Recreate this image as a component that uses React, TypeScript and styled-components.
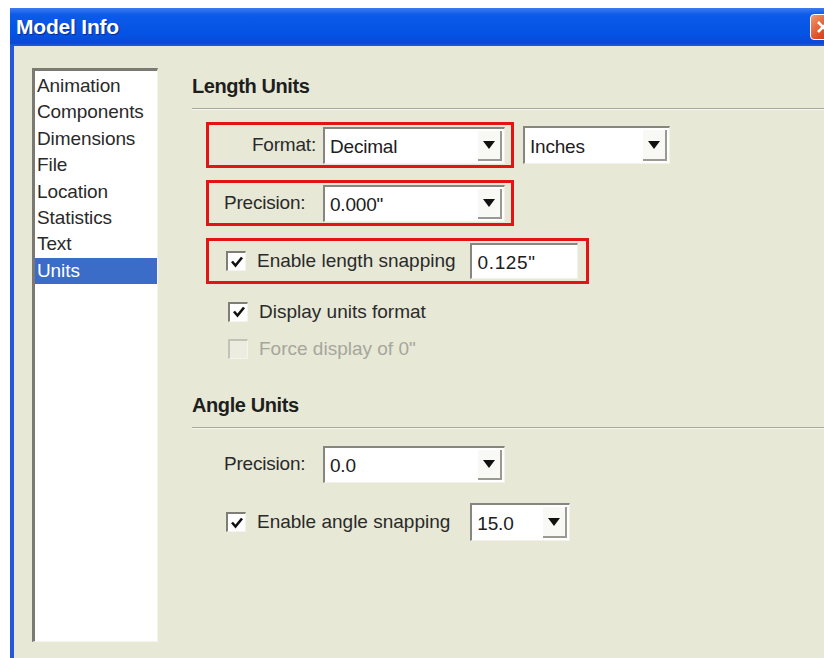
import React from 'react';
import styled, { createGlobalStyle } from 'styled-components';

const GlobalStyle = createGlobalStyle`
  html, body {
    margin: 0;
    padding: 0;
    background: #ffffff;
    overflow: hidden;
  }
  body {
    font-family: 'Liberation Sans', Arial, sans-serif;
  }
`;

const Screen = styled.div`
  width: 824px;
  height: 658px;
  overflow: hidden;
  padding: 8px 0 0 10px;
  box-sizing: border-box;
`;

const Window = styled.div`
  width: 830px;
  height: 660px;
  display: flex;
  flex-direction: column;
`;

const TitleBar = styled.div`
  height: 38px;
  flex: 0 0 38px;
  display: flex;
  align-items: center;
  justify-content: space-between;
  padding: 0 4px 0 6px;
  background: linear-gradient(
    #3d7bf2 0%,
    #0b5ae8 18%,
    #0553e4 70%,
    #0a48d4 92%,
    #1d5fd8 100%
  );
`;

const Title = styled.span`
  color: #ffffff;
  font-weight: bold;
  font-size: 21px;
  letter-spacing: -0.2px;
  text-shadow: 1px 1px 1px #0a2a90;
`;

const CloseButton = styled.div`
  width: 26px;
  height: 26px;
  box-sizing: border-box;
  border-radius: 4px;
  border: 1px solid #ffffff;
  background: linear-gradient(135deg, #f09a70, #dc4e22 60%, #c23a14);
  display: flex;
  align-items: center;
  justify-content: center;
`;

const Body = styled.div`
  flex: 1;
  display: flex;
  align-items: flex-start;
  gap: 34px;
  background: #e7e8d6;
  border-left: 4px solid #2458d8;
  padding: 22px 0 0 18px;
`;

const ListBox = styled.div`
  width: 126px;
  height: 574px;
  box-sizing: border-box;
  background: #ffffff;
  border-top: 3px solid #7a7a72;
  border-left: 3px solid #7a7a72;
  border-right: 1px solid #f4f4ec;
  border-bottom: 1px solid #f4f4ec;
  padding-top: 2px;
`;

const ListItem = styled.div<{ $selected?: boolean }>`
  height: 26.4px;
  line-height: 26.4px;
  font-size: 19px;
  letter-spacing: -0.1px;
  padding-left: 2px;
  color: ${(p) => (p.$selected ? '#ffffff' : '#2a2a2a')};
  background: ${(p) => (p.$selected ? '#3a6cc8' : 'transparent')};
`;

const Panel = styled.div`
  flex: 1;
  display: flex;
  flex-direction: column;
  padding-top: 6px;
`;

const Heading = styled.div<{ $gap?: number }>`
  font-weight: bold;
  font-size: 20px;
  line-height: 24px;
  letter-spacing: -0.4px;
  color: #1e1e1e;
  margin-top: ${(p) => p.$gap ?? 0}px;
`;

const Rule = styled.div`
  height: 0;
  border-top: 1px solid #a9a99a;
  border-bottom: 1px solid #f6f6ee;
  margin-top: 10px;
`;

const Fields = styled.div`
  display: flex;
  flex-direction: column;
  gap: 12px;
  margin-top: 12px;
  padding-left: 14px;
`;

const Line = styled.div`
  display: flex;
  align-items: center;
  gap: 9px;
`;

const Highlight = styled.div<{ $marked?: boolean; $right?: number }>`
  display: inline-flex;
  align-items: center;
  align-self: flex-start;
  height: 46px;
  box-sizing: border-box;
  border: 3px solid ${(p) => (p.$marked ? '#e31414' : 'transparent')};
  padding: 0 ${(p) => p.$right ?? 6}px 0 15px;
`;

const Label = styled.span<{ $width: number; $align?: string }>`
  width: ${(p) => p.$width}px;
  margin-right: 7px;
  text-align: ${(p) => p.$align ?? 'left'};
  font-size: 19px;
  letter-spacing: -0.2px;
  color: #2a2a2a;
`;

const Caption = styled.span<{ $gap?: number }>`
  margin-right: ${(p) => p.$gap ?? 0}px;
  font-size: 19px;
  letter-spacing: 0px;
  color: #2a2a2a;
`;

const ComboBox = styled.div<{ $width: number; $height?: number }>`
  width: ${(p) => p.$width}px;
  height: ${(p) => p.$height ?? 37}px;
  box-sizing: border-box;
  display: flex;
  align-items: stretch;
  background: #ffffff;
  border-top: 2px solid #86867e;
  border-left: 2px solid #86867e;
  border-right: 1px solid #f2f2ea;
  border-bottom: 1px solid #f2f2ea;
`;

const ComboText = styled.span`
  flex: 1;
  display: flex;
  align-items: center;
  padding: 3px 0 0 5px;
  font-size: 19px;
  letter-spacing: -0.2px;
  color: #202020;
`;

const ArrowButton = styled.span`
  width: 22px;
  margin: 2px 2px 2px 0;
  display: flex;
  align-items: center;
  justify-content: center;
  background: #f8f8f4;
  border-right: 2px solid #9a9a92;
  border-bottom: 2px solid #9a9a92;
`;

const Arrow = styled.span`
  width: 0;
  height: 0;
  border-left: 6px solid transparent;
  border-right: 6px solid transparent;
  border-top: 8px solid #111111;
`;

const TextBox = styled.div<{ $width: number }>`
  width: ${(p) => p.$width}px;
  height: 36px;
  box-sizing: border-box;
  display: flex;
  align-items: center;
  padding: 3px 0 0 6px;
  background: #ffffff;
  border-top: 2px solid #86867e;
  border-left: 2px solid #86867e;
  border-right: 1px solid #f2f2ea;
  border-bottom: 1px solid #f2f2ea;
  font-size: 19px;
  letter-spacing: 0.6px;
  color: #202020;
`;

const CheckGroup = styled.div`
  display: flex;
  flex-direction: column;
  margin-top: -3px;
`;

const CheckRow = styled.label<{ $disabled?: boolean }>`
  display: flex;
  align-items: center;
  height: 37px;
  padding-left: 20px;
  color: ${(p) => (p.$disabled ? '#a6a69c' : '#2a2a2a')};
  font-size: 19px;
  letter-spacing: 0px;
`;

const Box = styled.span<{ $disabled?: boolean }>`
  width: 20px;
  height: 20px;
  box-sizing: border-box;
  margin: 0 11px 0 2px;
  display: flex;
  align-items: center;
  justify-content: center;
  background: ${(p) => (p.$disabled ? '#ecece0' : '#ffffff')};
  border-top: 2px solid ${(p) => (p.$disabled ? '#c2c2b6' : '#7e7e76')};
  border-left: 2px solid ${(p) => (p.$disabled ? '#c2c2b6' : '#7e7e76')};
  border-right: 1px solid #f4f4ec;
  border-bottom: 1px solid #f4f4ec;
`;

const Combo = ({ value, width, height }: { value: string; width: number; height?: number }) => (
  <ComboBox $width={width} $height={height}>
    <ComboText>{value}</ComboText>
    <ArrowButton>
      <Arrow />
    </ArrowButton>
  </ComboBox>
);

const Check = ({ checked, disabled }: { checked?: boolean; disabled?: boolean }) => (
  <Box $disabled={disabled}>
    {checked && (
      <svg width="14" height="14" viewBox="0 0 14 14">
        <path d="M2 6.5 L5.5 10.5 L12 2.5" fill="none" stroke="#111" strokeWidth="2.6" />
      </svg>
    )}
  </Box>
);

const pages = ['Animation', 'Components', 'Dimensions', 'File', 'Location', 'Statistics', 'Text', 'Units'];

const ModelInfo = () => (
  <Screen>
    <GlobalStyle />
    <Window>
      <TitleBar>
        <Title>Model Info</Title>
        <CloseButton>
          <svg width="14" height="14" viewBox="0 0 14 14">
            <path d="M2 2 L12 12 M12 2 L2 12" stroke="#fff" strokeWidth="2.6" />
          </svg>
        </CloseButton>
      </TitleBar>
      <Body>
        <ListBox>
          {pages.map((page) => (
            <ListItem key={page} $selected={page === 'Units'}>
              {page}
            </ListItem>
          ))}
        </ListBox>

        <Panel>
          <Heading>Length Units</Heading>
          <Rule />
          <Fields>
            <Line>
              <Highlight $marked>
                <Label $width={92} $align="right">
                  Format:
                </Label>
                <Combo value="Decimal" width={182} />
              </Highlight>
              <Combo value="Inches" width={147} height={38} />
            </Line>
            <Highlight $marked>
              <Label $width={92}>Precision:</Label>
              <Combo value={'0.000"'} width={182} />
            </Highlight>
            <Highlight $marked $right={8}>
              <Check checked />
              <Caption $gap={14}>Enable length snapping</Caption>
              <TextBox $width={108}>0.125"</TextBox>
            </Highlight>
            <CheckGroup>
              <CheckRow>
                <Check checked />
                Display units format
              </CheckRow>
              <CheckRow $disabled>
                <Check disabled />
                Force display of 0"
              </CheckRow>
            </CheckGroup>
          </Fields>

          <Heading $gap={26}>Angle Units</Heading>
          <Rule />
          <Fields>
            <Highlight>
              <Label $width={92}>Precision:</Label>
              <Combo value="0.0" width={182} />
            </Highlight>
            <Highlight>
              <Check checked />
              <Caption $gap={20}>Enable angle snapping</Caption>
              <Combo value="15.0" width={100} height={38} />
            </Highlight>
          </Fields>
        </Panel>
      </Body>
    </Window>
  </Screen>
);

export default ModelInfo;
